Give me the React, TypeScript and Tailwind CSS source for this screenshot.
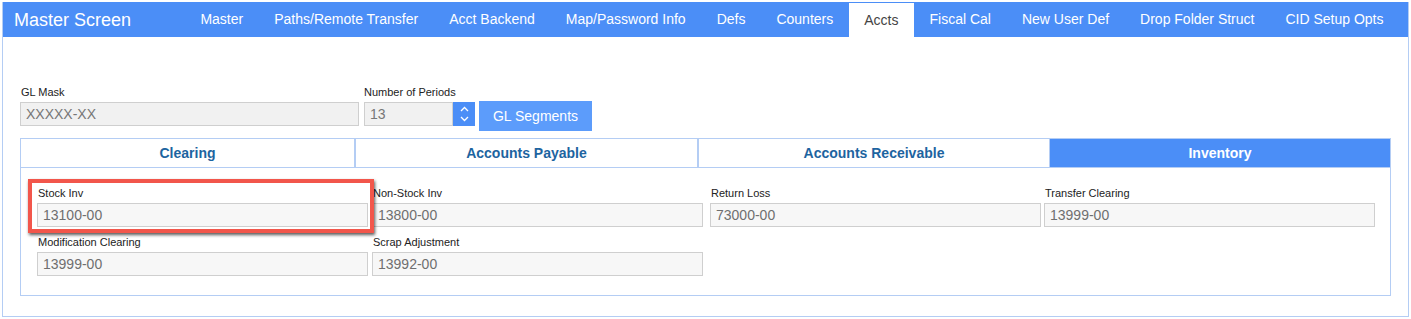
import React from 'react';

const navItems = [
  'Master',
  'Paths/Remote Transfer',
  'Acct Backend',
  'Map/Password Info',
  'Defs',
  'Counters',
  'Accts',
  'Fiscal Cal',
  'New User Def',
  'Drop Folder Struct',
  'CID Setup Opts',
];

const subTabs = [
  { label: 'Clearing', cls: 'w-[335px] border-r-2' },
  { label: 'Accounts Payable', cls: 'w-[343px] border-r-2' },
  { label: 'Accounts Receivable', cls: 'w-[351px] border-r' },
  { label: 'Inventory', cls: 'flex-1', active: true },
];

const fields = [
  { label: 'Stock Inv', value: '13100-00' },
  { label: 'Non-Stock Inv', value: '13800-00' },
  { label: 'Return Loss', value: '73000-00' },
  { label: 'Transfer Clearing', value: '13999-00' },
  { label: 'Modification Clearing', value: '13999-00' },
  { label: 'Scrap Adjustment', value: '13992-00' },
];

const Field = ({ label, value }: { label: string; value: string }) => (
  <div className="flex flex-col">
    <label className="block text-[11px] leading-[14px] mb-[3px] pl-px text-[#222]">{label}</label>
    <div className="w-[331px] h-[24px] border border-[#cfcfcf] bg-[#f7f7f7] pl-[5px] flex items-center text-[14px] text-[#6f6f6f]">
      {value}
    </div>
  </div>
);

export default function App() {
  return (
    <div className="w-full h-[319px] bg-white pt-[2px] pl-[2px] font-['Liberation_Sans',Arial,sans-serif]">
      <div className="w-[1407px] border-x border-b border-[#b4cdf4]">
        {/* top bar */}
        <div className="h-[35px] bg-[#4b8ef7] flex items-center">
          <span className="pl-[11px] text-[18px] text-white leading-none">Master Screen</span>
          <nav className="ml-auto pr-[9px] flex h-full items-center">
            {navItems.map((item) =>
              item === 'Accts' ? (
                <span
                  key={item}
                  className="self-end h-[34px] px-[15.5px] flex items-center bg-white text-[14px] text-[#444]"
                >
                  {item}
                </span>
              ) : (
                <span key={item} className="h-full px-[15.5px] flex items-center text-[14px] text-white">
                  {item}
                </span>
              )
            )}
          </nav>
        </div>

        <div className="px-[17px] pt-[48px] pb-[20px]">
          {/* GL mask row */}
          <div className="flex items-start">
            <div className="flex flex-col">
              <label className="block text-[11px] leading-[14px] mb-[3px] pl-px text-[#222]">GL Mask</label>
              <div className="w-[339px] h-[24px] border border-[#cfcfcf] bg-[#f1f1f1] pl-[5px] flex items-center text-[14px] text-[#777]">
                XXXXX-XX
              </div>
            </div>
            <div className="flex flex-col ml-[5px]">
              <label className="block text-[11px] leading-[14px] mb-[3px] text-[#222]">Number of Periods</label>
              <div className="flex">
                <div className="w-[89px] h-[24px] border border-[#cfcfcf] bg-[#f1f1f1] pl-[5px] flex items-center text-[14px] text-[#777]">
                  13
                </div>
                <div className="w-[22px] h-[24px] bg-[#4b8ef7] flex flex-col items-center justify-center gap-[4px]">
                  <svg width="9" height="6" viewBox="0 0 9 6" fill="none" stroke="white" strokeWidth="1.3">
                    <path d="M1 5 L4.5 1.5 L8 5" />
                  </svg>
                  <svg width="9" height="6" viewBox="0 0 9 6" fill="none" stroke="white" strokeWidth="1.3">
                    <path d="M1 1 L4.5 4.5 L8 1" />
                  </svg>
                </div>
              </div>
            </div>
            <button className="ml-[4px] mt-[16px] w-[113px] h-[30px] bg-[#5c9cfb] text-white text-[14px] flex items-center justify-center">
              GL Segments
            </button>
          </div>

          {/* sub tabs */}
          <div className="mt-[7px] w-[1371px] border border-[#b4cdf4]">
            <div className="flex h-[29px] border-b border-[#b4cdf4]">
              {subTabs.map((t) => (
                <div
                  key={t.label}
                  className={`${t.cls} border-[#b4cdf4] flex items-center justify-center text-[14px] font-bold ${
                    t.active ? 'bg-[#4b8ef7] text-white' : 'bg-white text-[#1d64a0]'
                  }`}
                >
                  {t.label}
                </div>
              ))}
            </div>

            <div className="relative pl-[16px] pt-[18px] pb-[19px]">
              <div className="grid grid-cols-[335px_338px_334px_335px] gap-y-[8px]">
                {fields.map((f) => (
                  <Field key={f.label} label={f.label} value={f.value} />
                ))}
              </div>
              {/* highlight annotation */}
              <div className="absolute left-[7px] top-[11px] w-[346px] h-[54px] border-4 border-[#f2564b] shadow-[1px_2px_3px_rgba(0,0,0,0.65)] pointer-events-none" />
            </div>
          </div>
        </div>
      </div>
    </div>
  );
}
